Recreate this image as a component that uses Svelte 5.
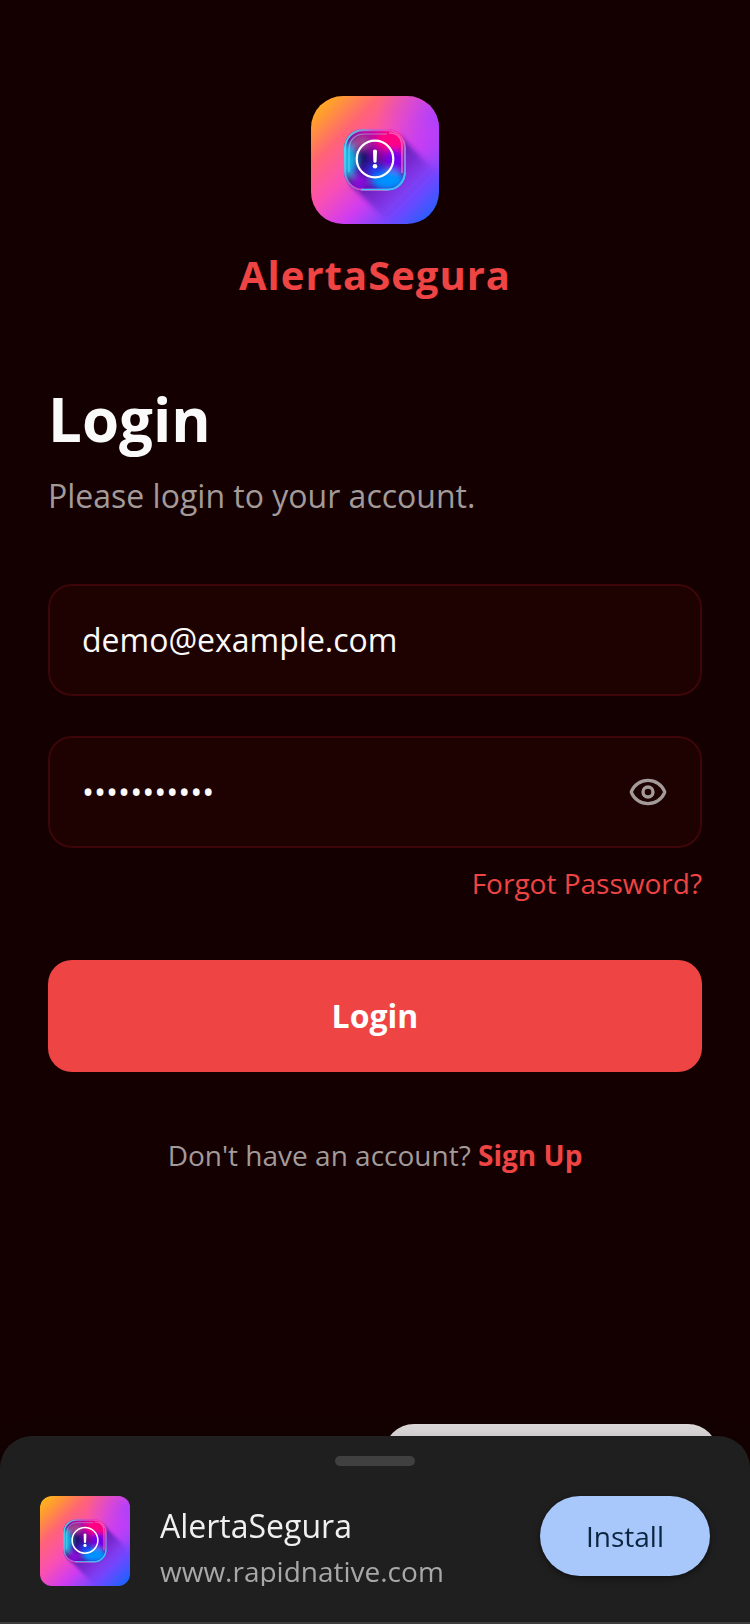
<script lang="ts">
    let email = $state('demo@example.com');
    let password = $state('password123');
    let showPassword = $state(false);

    const togglePassword = () => {
        showPassword = !showPassword;
    };
</script>

{#snippet logo(id: string)}
    <svg class="logo" viewBox="0 0 128 128" aria-hidden="true">
        <defs>
            <linearGradient id="{id}-bg" x1="0" y1="0" x2="1" y2="1">
                <stop offset="0" stop-color="#ffbe10" />
                <stop offset="0.12" stop-color="#ff9a32" />
                <stop offset="0.27" stop-color="#ff6475" />
                <stop offset="0.45" stop-color="#f94fb4" />
                <stop offset="0.62" stop-color="#d03cf0" />
                <stop offset="0.8" stop-color="#7048ff" />
                <stop offset="1" stop-color="#0868ff" />
            </linearGradient>
            <radialGradient id="{id}-violet" gradientUnits="userSpaceOnUse" cx="128" cy="20" r="62">
                <stop offset="0" stop-color="#a840ff" stop-opacity="0.9" />
                <stop offset="1" stop-color="#c040f8" stop-opacity="0" />
            </radialGradient>
            <linearGradient id="{id}-shade" gradientUnits="userSpaceOnUse" x1="64" y1="64" x2="104" y2="104">
                <stop offset="0" stop-color="#3c1098" stop-opacity="0.9" />
                <stop offset="0.5" stop-color="#4c1cc0" stop-opacity="0.6" />
                <stop offset="1" stop-color="#4a38f0" stop-opacity="0" />
            </linearGradient>
            <linearGradient id="{id}-tile" x1="0.1" y1="1" x2="0.8" y2="0">
                <stop offset="0" stop-color="#6a08c8" />
                <stop offset="0.45" stop-color="#3a0a96" />
                <stop offset="0.7" stop-color="#b000a8" />
                <stop offset="1" stop-color="#ff0090" />
            </linearGradient>
            <linearGradient id="{id}-edge" x1="0" y1="0.3" x2="1" y2="0.7">
                <stop offset="0" stop-color="#4be4f4" />
                <stop offset="0.3" stop-color="#c46ad0" />
                <stop offset="0.7" stop-color="#ff4bb4" />
                <stop offset="1" stop-color="#62b0ff" />
            </linearGradient>
            <clipPath id="{id}-clip">
                <rect x="33" y="33" width="62" height="62" rx="19" />
            </clipPath>
            <filter id="{id}-soft" x="-50%" y="-50%" width="200%" height="200%">
                <feGaussianBlur stdDeviation="3" />
            </filter>
            <filter id="{id}-fine" x="-20%" y="-20%" width="140%" height="140%">
                <feGaussianBlur stdDeviation="2.5" />
            </filter>
            <filter id="{id}-sheen" x="-20%" y="-20%" width="140%" height="140%">
                <feGaussianBlur stdDeviation="0.6" />
            </filter>
        </defs>
        <rect width="128" height="128" fill="url(#{id}-bg)" />
        <rect width="128" height="128" fill="url(#{id}-violet)" />
        <path d="M89 40l34 34v49H74L40 89z" fill="url(#{id}-shade)" filter="url(#{id}-fine)" />
        <g clip-path="url(#{id}-clip)">
            <rect x="33" y="33" width="62" height="62" fill="url(#{id}-tile)" />
            <g filter="url(#{id}-soft)">
                <ellipse cx="37" cy="65" rx="8" ry="18" fill="#16b8e8" />
                <ellipse cx="50" cy="46" rx="10" ry="7" fill="#a04490" />
                <ellipse cx="80" cy="44" rx="15" ry="10" fill="#ff0082" />
                <ellipse cx="83" cy="65" rx="9" ry="12" fill="#7000f0" />
                <ellipse cx="51" cy="62" rx="6" ry="9" fill="#1b1670" />
                <ellipse cx="77" cy="84" rx="17" ry="10" fill="#0092ff" />
                <ellipse cx="48" cy="86" rx="9" ry="7" fill="#8a08d8" />
                <ellipse cx="65" cy="74" rx="9" ry="6" fill="#1d3cf0" />
                <ellipse cx="38" cy="84" rx="3" ry="6" fill="#20206c" />
            </g>
            <rect x="34" y="34" width="60" height="60" rx="18" fill="none" stroke="url(#{id}-edge)" stroke-width="2.4" opacity="0.85" filter="url(#{id}-sheen)" />
            <path d="M38 76V54c0-10 6-16 16-16h22" fill="none" stroke="#9deaf4" stroke-width="1.2" opacity="0.5" filter="url(#{id}-sheen)" />
            <path d="M78 37c8 0 13 5 13 14v26" fill="none" stroke="#ff8ad8" stroke-width="1.6" opacity="0.65" filter="url(#{id}-sheen)" />
            <path d="M50 93.5h27c10 0 17-7 17-17" fill="none" stroke="#3cc4ff" stroke-width="1.6" filter="url(#{id}-sheen)" />
        </g>
        <circle cx="64" cy="63" r="18.3" fill="none" stroke="#fff" stroke-width="2.2" />
        <path d="M62 55a2 1.6 0 0 1 4 0l-.4 10.4a1.6 1.3 0 0 1-3.2 0z" fill="#fff" />
        <circle cx="64" cy="70.3" r="2.3" fill="#fff" />
    </svg>
{/snippet}

<main class="screen">
    <header class="brand">
        <div class="brand-logo">{@render logo('brand')}</div>
        <p class="brand-name">AlertaSegura</p>
    </header>

    <h1>Login</h1>
    <p class="subtitle">Please login to your account.</p>

    <form onsubmit={(e) => e.preventDefault()}>
        <div class="field">
            <input type="email" aria-label="Email" bind:value={email} />
        </div>
        <div class="field">
            <input
                type={showPassword ? 'text' : 'password'}
                aria-label="Password"
                bind:value={password}
            />
            <button type="button" class="eye" aria-label="Show password" onclick={togglePassword}>
                <svg viewBox="0 0 24 24" aria-hidden="true">
                    <path d="M2.062 12.348a1 1 0 0 1 0-.696 10.75 10.75 0 0 1 19.876 0 1 1 0 0 1 0 .696 10.75 10.75 0 0 1-19.876 0" />
                    <circle cx="12" cy="12" r="3" />
                </svg>
            </button>
        </div>
        <a class="forgot" href="#forgot">Forgot Password?</a>
        <button type="submit" class="submit">Login</button>
    </form>

    <p class="signup">Don't have an account? <a href="#signup">Sign Up</a></p>
</main>

<div class="floating-pill"></div>

<aside class="sheet">
    <div class="handle"></div>
    <div class="app">
        <div class="app-logo">{@render logo('app')}</div>
        <div class="app-text">
            <p class="app-name">AlertaSegura</p>
            <p class="app-url">www.rapidnative.com</p>
        </div>
        <button type="button" class="install">Install</button>
    </div>
</aside>

<style>
    :global(body) {
        background: #140000;
        font-family: 'Open Sans', 'Noto Sans', sans-serif;
    }
    p,
    h1 {
        margin: 0;
    }
    a {
        color: #ef4444;
        text-decoration: none;
    }
    input,
    button {
        font: inherit;
        border: 0;
        padding: 0;
    }
    button {
        cursor: pointer;
    }
    .screen {
        box-sizing: border-box;
        min-height: 100vh;
        padding: 96px 48px 190px;
    }
    .brand {
        display: flex;
        flex-direction: column;
        align-items: center;
        gap: 24px;
        margin-bottom: 76px;
    }
    .logo {
        display: block;
        width: 100%;
        height: 100%;
    }
    .brand-logo {
        width: 128px;
        height: 128px;
        border-radius: 32px;
        overflow: hidden;
    }
    .brand-name {
        color: #ef4444;
        font-size: 40px;
        line-height: 54px;
        font-weight: 700;
        letter-spacing: 1px;
    }
    h1 {
        color: #fafafa;
        font-size: 60px;
        line-height: 82px;
        font-weight: 700;
        margin-bottom: 14px;
    }
    .subtitle {
        color: #a39a9a;
        font-size: 32px;
        line-height: 44px;
        margin-bottom: 66px;
    }
    form {
        display: flex;
        flex-direction: column;
    }
    .field {
        display: flex;
        align-items: center;
        box-sizing: border-box;
        height: 112px;
        padding: 0 32px;
        margin-bottom: 40px;
        background: #1e0101;
        border: 2px solid #3d0609;
        border-radius: 24px;
    }
    .field:nth-child(2) {
        margin-bottom: 16px;
    }
    .field input {
        flex: 1;
        min-width: 0;
        background: transparent;
        color: #fafafa;
        font-size: 32px;
        line-height: 44px;
        outline: none;
    }
    .eye {
        width: 40px;
        height: 40px;
        background: transparent;
    }
    .eye svg {
        display: block;
        fill: none;
        stroke: #a39a9a;
        stroke-width: 2;
        stroke-linecap: round;
        stroke-linejoin: round;
    }
    .forgot {
        align-self: flex-end;
        font-size: 28px;
        line-height: 38px;
        margin-bottom: 58px;
    }
    .submit {
        height: 112px;
        background: #ef4444;
        border-radius: 24px;
        color: #fff;
        font-size: 32px;
        line-height: 44px;
        font-weight: 700;
    }
    .signup {
        margin-top: 64px;
        color: #a39a9a;
        font-size: 28px;
        line-height: 38px;
        text-align: center;
    }
    .signup a {
        font-weight: 700;
    }
    .floating-pill {
        position: fixed;
        right: 32px;
        bottom: 140px;
        width: 334px;
        height: 60px;
        border-radius: 30px;
        background: #dedadb;
    }
    .sheet {
        position: fixed;
        left: 0;
        right: 0;
        bottom: 0;
        display: flex;
        flex-direction: column;
        gap: 30px;
        padding: 20px 40px 36px;
        background: #1f1f1f;
        border-bottom: 2px solid #3c3c3c;
        border-radius: 32px 32px 0 0;
        box-shadow: 0 0 20px rgba(0, 0, 0, 0.12);
    }
    .handle {
        align-self: center;
        width: 80px;
        height: 10px;
        border-radius: 5px;
        background: #404040;
    }
    .app {
        display: flex;
        align-items: flex-start;
        gap: 30px;
    }
    .app-logo {
        width: 90px;
        height: 90px;
        border-radius: 12px;
        overflow: hidden;
    }
    .app-text {
        flex: 1;
        display: flex;
        flex-direction: column;
        gap: 4px;
        box-sizing: border-box;
        height: 90px;
        padding-top: 8px;
        overflow: hidden;
    }
    .app-name {
        color: #f0f0f0;
        font-size: 32px;
        line-height: 44px;
    }
    .app-url {
        color: #a8a8a8;
        font-size: 28px;
        line-height: 38px;
    }
    .install {
        width: 170px;
        height: 80px;
        border-radius: 40px;
        background: #a8c7fa;
        color: #0b2440;
        font-size: 28px;
        line-height: 38px;
        box-shadow: 0 2px 6px rgba(0, 0, 0, 0.5);
    }
</style>
